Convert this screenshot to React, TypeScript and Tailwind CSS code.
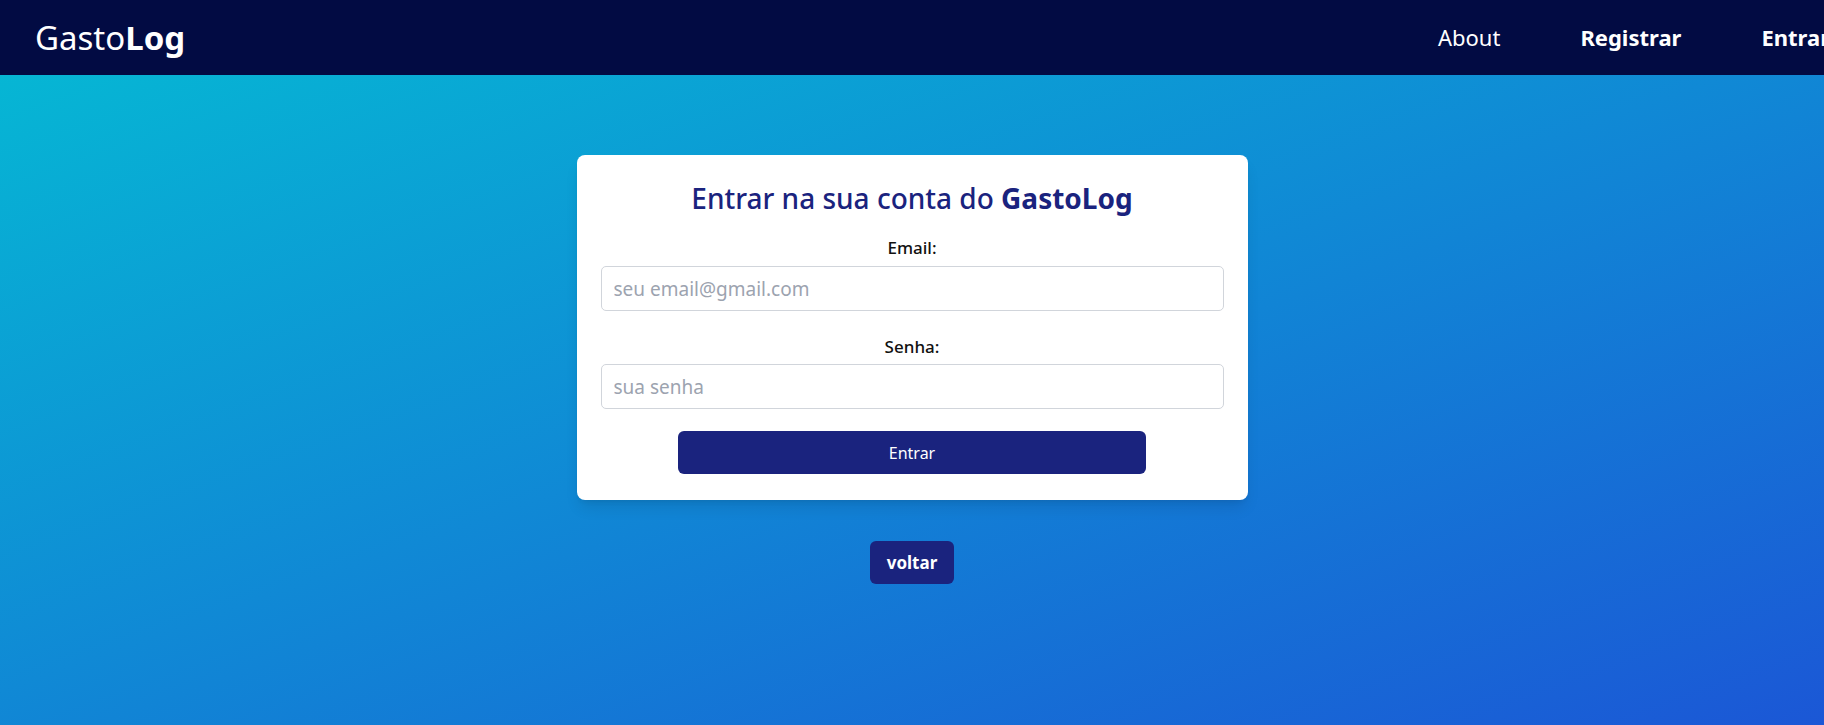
import React from "react";

export default function App() {
  const font = { fontFamily: '"Segoe UI", "Noto Sans", "Open Sans", sans-serif' };
  return (
    <div className="min-h-[725px] w-full flex flex-col overflow-hidden" style={font}>
      <header className="h-[75px] bg-[#020b43] flex items-center justify-between pl-[35px] shrink-0 overflow-hidden">
        <div className="text-white text-[33px] leading-none whitespace-nowrap">
          Gasto<span className="font-bold">Log</span>
        </div>
        <nav className="flex items-center text-white text-[22px] whitespace-nowrap -mr-[46px]">
          <a className="px-[40px] font-normal">About</a>
          <a className="px-[40px] font-bold">Registrar</a>
          <a className="px-[40px] font-bold">Entrar</a>
        </nav>
      </header>
      <main className="flex-1 bg-[linear-gradient(to_bottom_right,#06b6d4,#1b57d6)] flex flex-col items-center pt-[80px]">
        <div className="w-[671px] bg-white rounded-lg shadow-lg px-6 pt-[26px] pb-[26px] flex flex-col items-center">
          <h1 className="text-[28px] font-medium text-[#1a237e] leading-[35px] mb-[20px] whitespace-nowrap">
            Entrar na sua conta do <span className="font-bold">GastoLog</span>
          </h1>
          <label className="text-[17px] leading-6 font-medium text-[#111] mb-[6px]">Email:</label>
          <input
            className="w-full h-[45px] border border-[#d1d5db] rounded-[5px] px-3 text-[19px] placeholder:text-[#9ca3af] outline-none"
            placeholder="seu email@gmail.com"
          />
          <label className="text-[17px] leading-6 font-medium text-[#111] mt-[24px] mb-[5px]">Senha:</label>
          <input
            type="password"
            className="w-full h-[45px] border border-[#d1d5db] rounded-[5px] px-3 text-[19px] placeholder:text-[#9ca3af] outline-none"
            placeholder="sua senha"
          />
          <button className="w-3/4 h-[43px] mt-[22px] bg-[#1a237e] text-white text-[16px] rounded-md">
            Entrar
          </button>
        </div>
        <button className="mt-[41px] h-[43px] px-[17px] bg-[#1a237e] text-white text-[17px] font-bold rounded-md">
          voltar
        </button>
      </main>
    </div>
  );
}
